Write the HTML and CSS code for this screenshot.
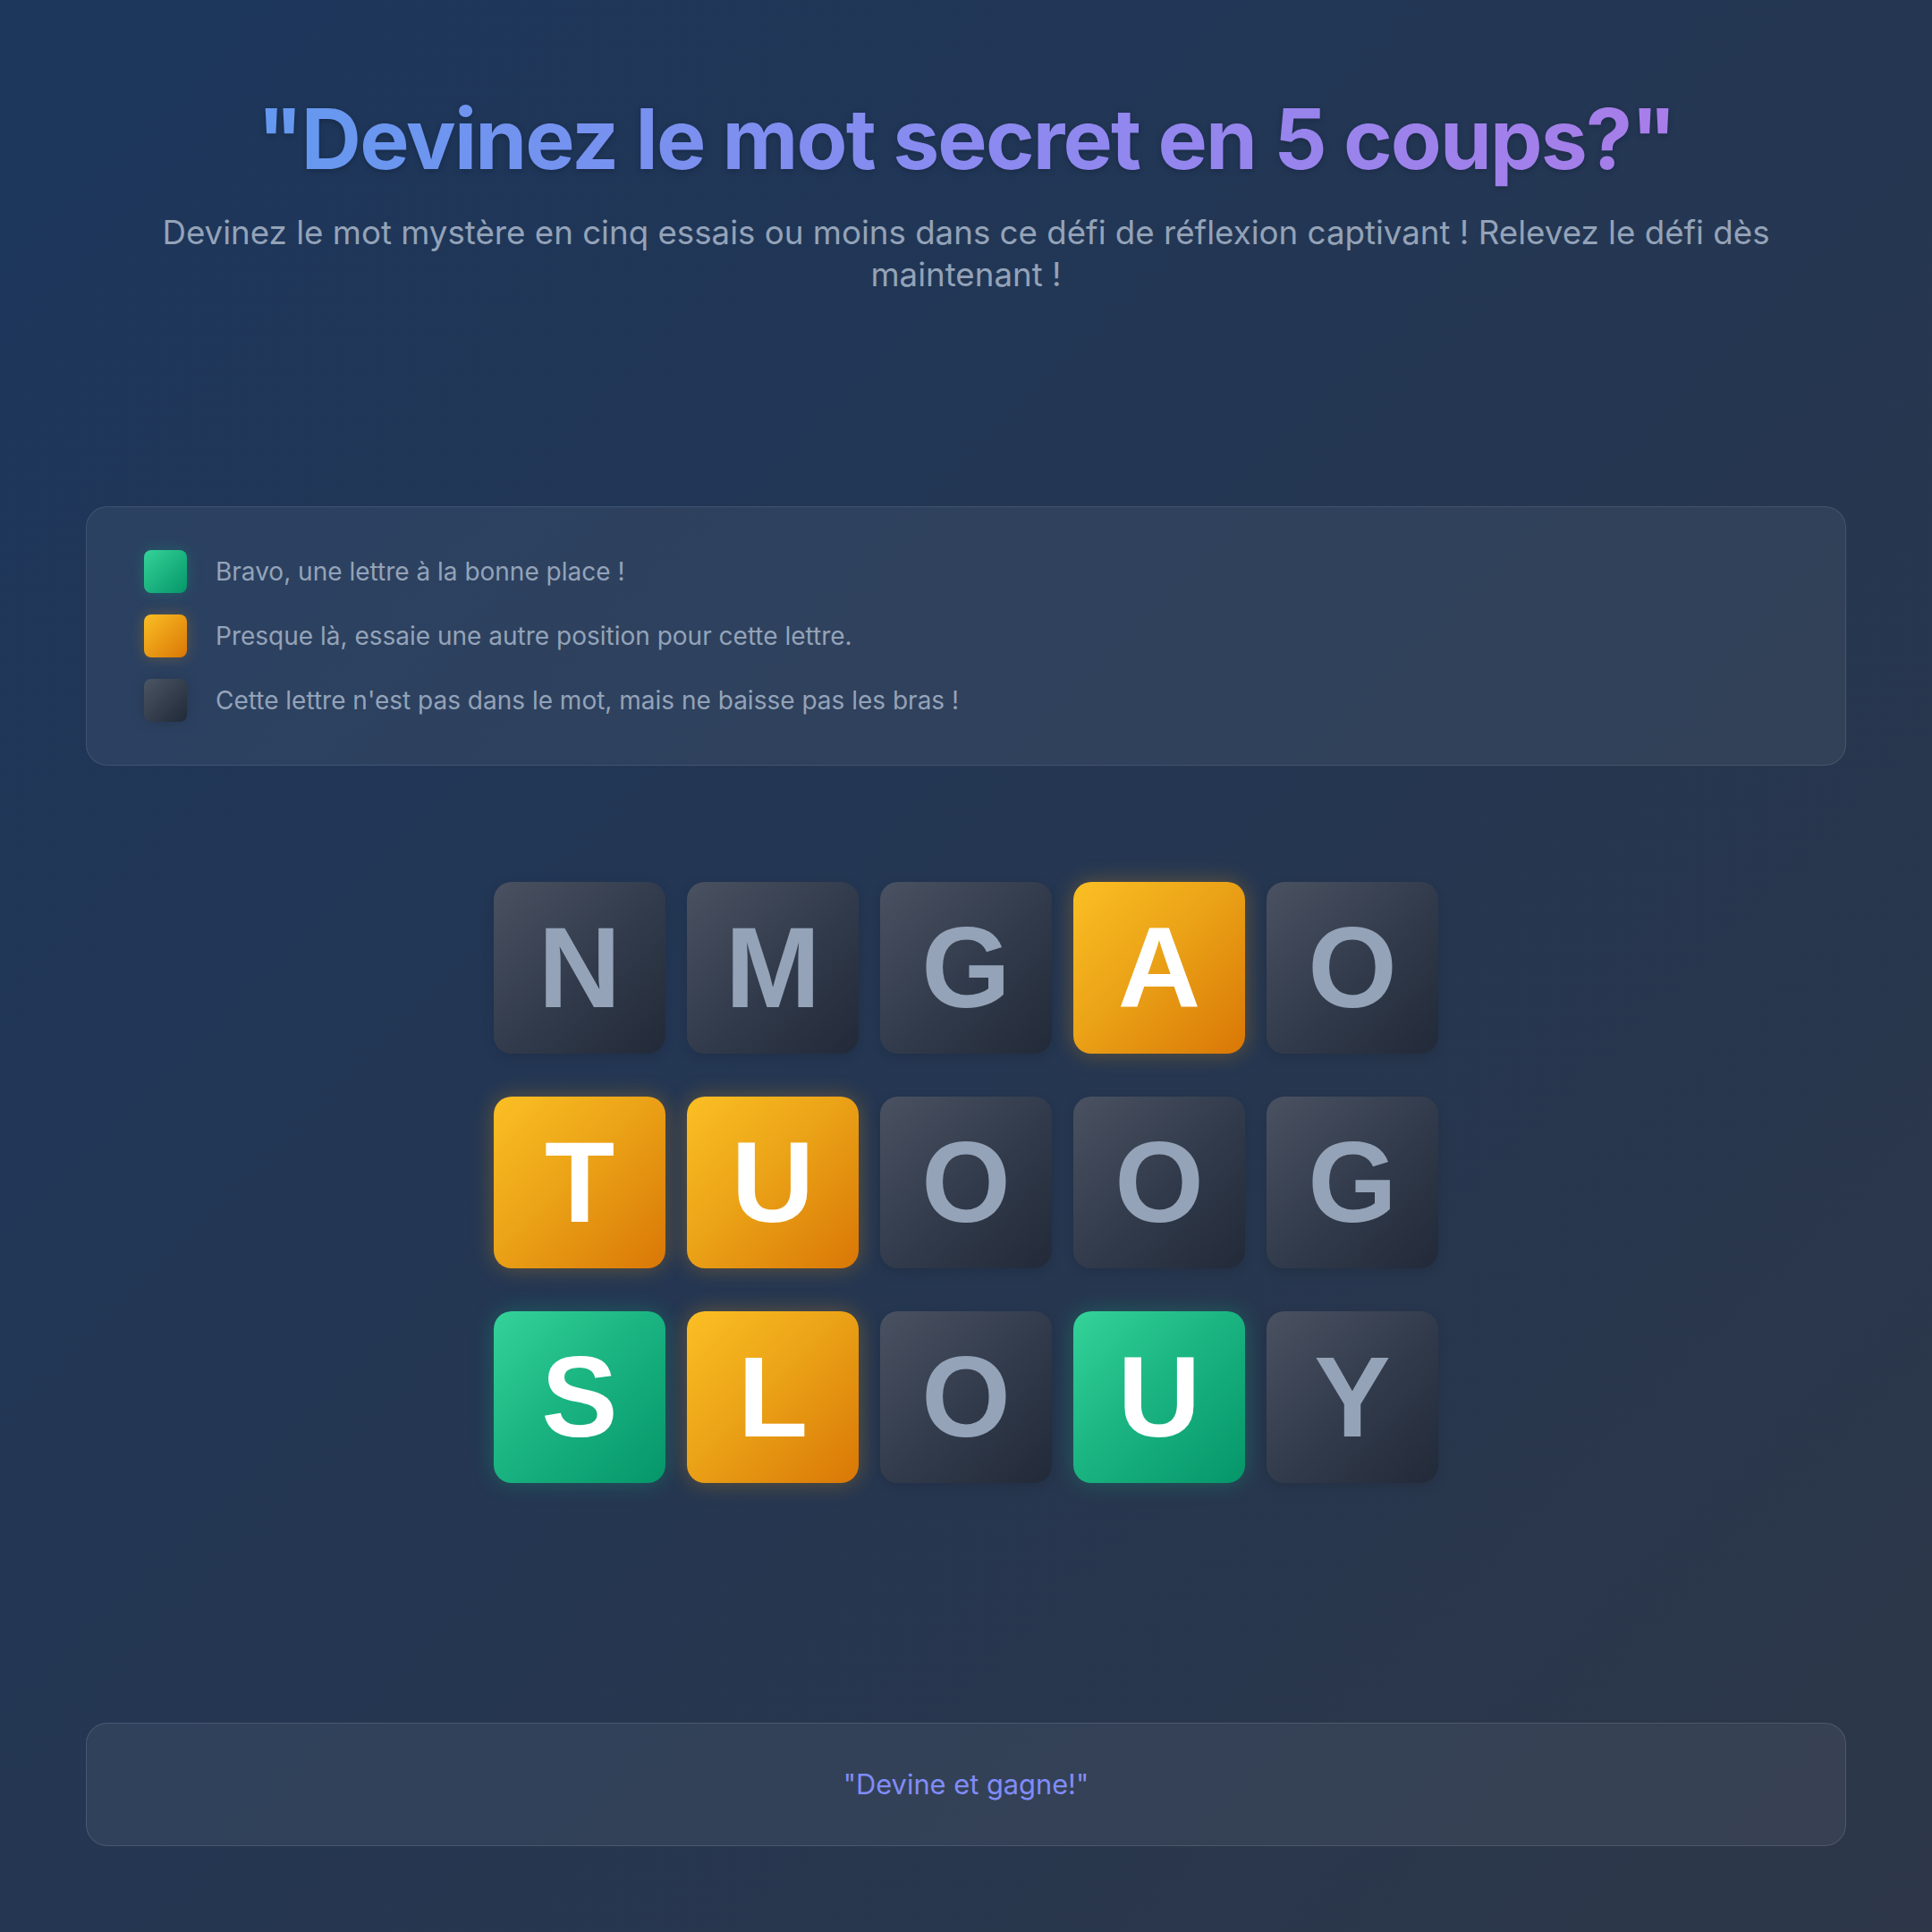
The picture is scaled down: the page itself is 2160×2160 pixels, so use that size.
FILE: index.html
```html
<!DOCTYPE html>
<html lang="fr">
<head>
<meta charset="utf-8">
<title>Devinez le mot secret</title>
<link rel="stylesheet" href="styles.css">
</head>
<body>
<div class="page">
  <header class="header">
    <h1 class="title">"Devinez le mot secret en 5 coups?"</h1>
    <p class="subtitle">Devinez le mot mystère en cinq essais ou moins dans ce défi de réflexion captivant ! Relevez le défi dès maintenant !</p>
  </header>

  <section class="legend">
    <div class="legend-row">
      <span class="swatch swatch-correct"></span>
      <span class="legend-text">Bravo, une lettre à la bonne place !</span>
    </div>
    <div class="legend-row">
      <span class="swatch swatch-present"></span>
      <span class="legend-text">Presque là, essaie une autre position pour cette lettre.</span>
    </div>
    <div class="legend-row">
      <span class="swatch swatch-absent"></span>
      <span class="legend-text">Cette lettre n'est pas dans le mot, mais ne baisse pas les bras !</span>
    </div>
  </section>

  <main class="board">
    <div class="tile absent">N</div>
    <div class="tile absent">M</div>
    <div class="tile absent">G</div>
    <div class="tile present">A</div>
    <div class="tile absent">O</div>

    <div class="tile present">T</div>
    <div class="tile present">U</div>
    <div class="tile absent">O</div>
    <div class="tile absent">O</div>
    <div class="tile absent">G</div>

    <div class="tile correct">S</div>
    <div class="tile present">L</div>
    <div class="tile absent">O</div>
    <div class="tile correct">U</div>
    <div class="tile absent">Y</div>
  </main>

  <footer class="footer">
    <p class="footer-text">"Devine et gagne!"</p>
  </footer>
</div>
</body>
</html>
```

FILE: styles.css
```css
html, body {
  margin: 0;
  padding: 0;
}

body {
  min-height: 2160px;
  background: linear-gradient(135deg, #1c365c 0%, #2d3748 100%);
  font-family: Inter, "Noto Sans", sans-serif;
  color: #94a3b8;
}

.page {
  padding: 98px 96px 97px;
  display: flex;
  flex-direction: column;
}

.header {
  text-align: center;
}

.title {
  display: inline-block;
  margin: 0;
  font-size: 93px;
  font-weight: 700;
  line-height: 114px;
  letter-spacing: -0.02em;
  background: linear-gradient(90deg, #6499ef 0%, #8a8af0 50%, #a87de9 100%);
  -webkit-background-clip: text;
  background-clip: text;
  color: transparent;
  filter: drop-shadow(0 2px 3px rgba(10, 20, 40, 0.35));
}

.subtitle {
  margin: 24px auto 0;
  max-width: 1810px;
  font-size: 36.7px;
  line-height: 47px;
  color: #94a3b8;
}

.legend {
  margin-top: 236px;
  padding: 48px 64px;
  border: 1px solid rgba(255, 255, 255, 0.1);
  border-radius: 24px;
  background: rgba(255, 255, 255, 0.055);
  display: flex;
  flex-direction: column;
  gap: 24px;
}

.legend-row {
  display: flex;
  align-items: center;
  gap: 32px;
  height: 48px;
}

.swatch {
  width: 48px;
  height: 48px;
  border-radius: 8px;
  flex: none;
}

.swatch-correct {
  background: linear-gradient(135deg, #34d399, #059669);
  box-shadow: 0 0 16px rgba(16, 185, 129, 0.25);
}

.swatch-present {
  background: linear-gradient(135deg, #fbbf24, #d97706);
  box-shadow: 0 0 16px rgba(245, 158, 11, 0.25);
}

.swatch-absent {
  background: linear-gradient(135deg, #4b5563, #1f2937);
  box-shadow: 0 0 16px rgba(0, 0, 0, 0.15);
}

.legend-text {
  font-size: 28px;
  color: #94a3b8;
}

.board {
  margin-top: 130px;
  display: grid;
  grid-template-columns: repeat(5, 192px);
  grid-auto-rows: 192px;
  column-gap: 24px;
  row-gap: 48px;
  justify-content: center;
}

.tile {
  border-radius: 20px;
  display: flex;
  align-items: center;
  justify-content: center;
  font-family: "Liberation Sans", Arial, sans-serif;
  font-weight: 700;
  font-size: 128px;
  line-height: 1;
}

.tile.absent {
  background: linear-gradient(135deg, #4a5262 0%, #313a4a 55%, #222a39 100%);
  color: #94a3b8;
  box-shadow: 0 4px 14px rgba(0, 0, 0, 0.12);
}

.tile.present {
  background: linear-gradient(135deg, #fbbf24 0%, #eba317 45%, #d97706 100%);
  color: #ffffff;
  box-shadow: 0 0 24px rgba(245, 158, 11, 0.3);
}

.tile.correct {
  background: linear-gradient(135deg, #34d399 0%, #1bb582 45%, #059669 100%);
  color: #ffffff;
  box-shadow: 0 0 24px rgba(16, 185, 129, 0.3);
}

.footer {
  margin-top: 268px;
  padding: 48px;
  border: 1px solid rgba(255, 255, 255, 0.12);
  border-radius: 24px;
  background: rgba(255, 255, 255, 0.055);
  text-align: center;
}

.footer-text {
  margin: 0;
  font-size: 30.8px;
  line-height: 40px;
  color: #818cf8;
}
```
